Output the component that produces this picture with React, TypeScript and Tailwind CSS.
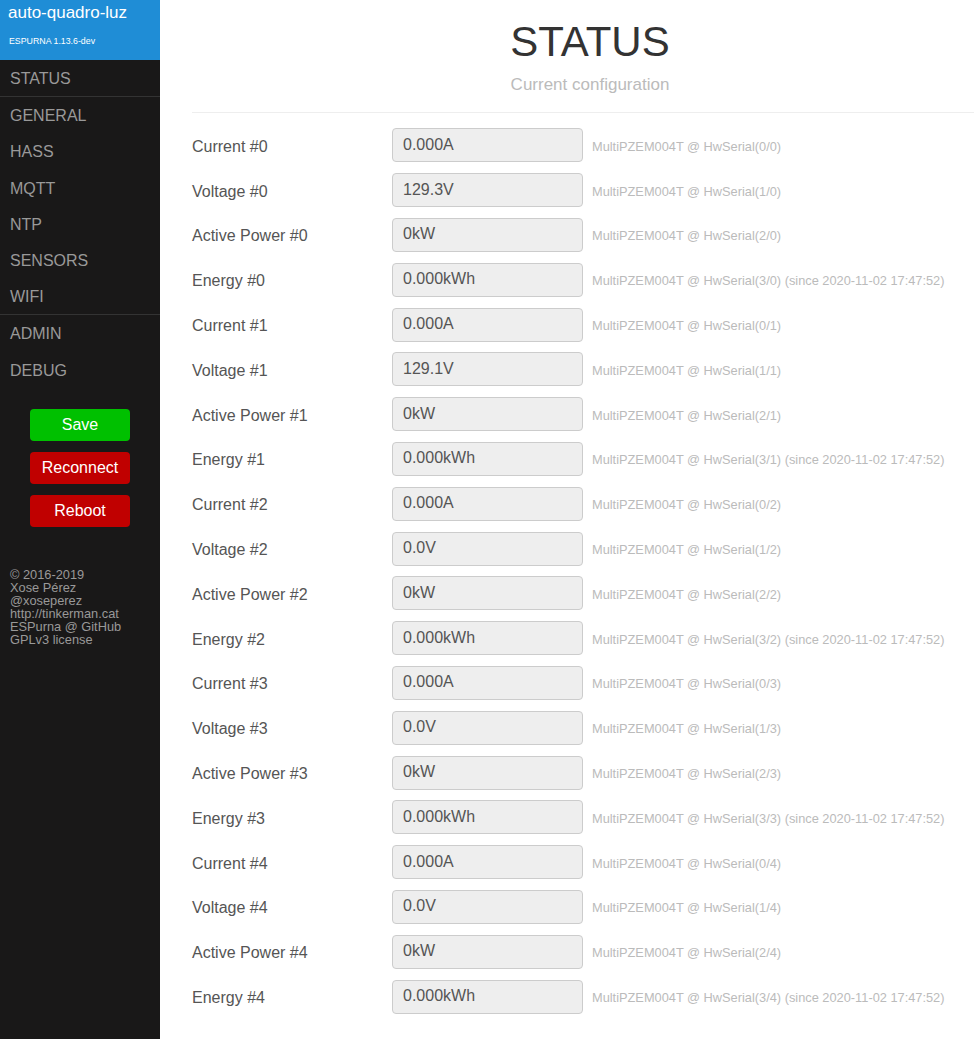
const voltages = ['129.3V', '129.1V', '0.0V', '0.0V', '0.0V']

type Row = { label: string; value: string; hint: string }

const rows: Row[] = []
for (let n = 0; n < 5; n++) {
  rows.push({ label: `Current #${n}`, value: '0.000A', hint: `MultiPZEM004T @ HwSerial(0/${n})` })
  rows.push({ label: `Voltage #${n}`, value: voltages[n], hint: `MultiPZEM004T @ HwSerial(1/${n})` })
  rows.push({ label: `Active Power #${n}`, value: '0kW', hint: `MultiPZEM004T @ HwSerial(2/${n})` })
  rows.push({
    label: `Energy #${n}`,
    value: '0.000kWh',
    hint: `MultiPZEM004T @ HwSerial(3/${n}) (since 2020-11-02 17:47:52)`,
  })
}

const menuTop = ['GENERAL', 'HASS', 'MQTT', 'NTP', 'SENSORS', 'WIFI']
const menuBottom = ['ADMIN', 'DEBUG']

function MenuItem({ label }: { label: string }) {
  return (
    <div className="h-[36.2px] flex items-center px-[10px] pt-[2px] text-[16px] text-[#999]">
      {label}
    </div>
  )
}

function Sidebar() {
  return (
    <div className="w-[160px] shrink-0 h-full bg-[#191818] flex flex-col">
      {/* Brand */}
      <div className="h-[60px] bg-[#1f8dd6] px-[8px] pt-[3px] text-white">
        <div className="text-[17px] leading-[20px]">auto-quadro-luz</div>
        <div className="text-[8.8px] leading-[10px] mt-[13px] pl-[1px]">ESPURNA 1.13.6-dev</div>
      </div>

      <div className="border-b border-[#333]">
        <MenuItem label="STATUS" />
      </div>
      <div className="border-b border-[#333]">
        {menuTop.map((m) => (
          <MenuItem key={m} label={m} />
        ))}
      </div>
      <div>
        {menuBottom.map((m) => (
          <MenuItem key={m} label={m} />
        ))}
      </div>

      {/* Buttons */}
      <div className="flex flex-col items-center gap-[10.6px] mt-[21px]">
        <button className="w-[100px] h-[32.5px] rounded-[4px] bg-[#00c000] text-white text-[16px]">Save</button>
        <button className="w-[100px] h-[32.5px] rounded-[4px] bg-[#c00000] text-white text-[16px]">Reconnect</button>
        <button className="w-[100px] h-[32.5px] rounded-[4px] bg-[#c00000] text-white text-[16px]">Reboot</button>
      </div>

      <div className="mt-[41px] px-[10px] text-[12.8px] leading-[13px] text-[#999]">
        <div>© 2016-2019</div>
        <div>Xose Pérez</div>
        <div>@xoseperez</div>
        <div>http://tinkerman.cat</div>
        <div>ESPurna @ GitHub</div>
        <div>GPLv3 license</div>
      </div>
    </div>
  )
}

export default function App() {
  return (
    <div className="flex h-screen overflow-hidden bg-white font-['Liberation_Sans',Arial,sans-serif]">
      <Sidebar />

      <div className="flex-1 min-w-0 overflow-hidden">
        <div className="w-[800px] ml-[32px]">
          {/* Header */}
          <div className="pt-[19px] pb-[17px] border-b border-[#eee]">
            <div className="w-[796px] text-center">
              <h1 className="text-[42px] leading-[46px] font-light text-[#333]">STATUS</h1>
              <p className="mt-[10px] text-[17px] leading-[20px] text-[#bbb]">Current configuration</p>
            </div>
          </div>

          {/* Rows */}
          <div className="pt-[10px]">
            {rows.map((r) => (
              <div key={r.label} className="h-[44.8px] flex items-center">
                <div className="w-[200px] shrink-0 pt-[3px] text-[16px] text-[#555]">{r.label}</div>
                <div className="w-[191px] h-[34px] shrink-0 rounded-[4px] border border-[#ccc] bg-[#eee] flex items-center px-[10px] pb-[1px] text-[16px] text-[#555]">
                  {r.value}
                </div>
                <div className="ml-[9px] pt-[2px] whitespace-nowrap text-[12.8px] text-[#bbb]">{r.hint}</div>
              </div>
            ))}
          </div>
        </div>
      </div>
    </div>
  )
}
